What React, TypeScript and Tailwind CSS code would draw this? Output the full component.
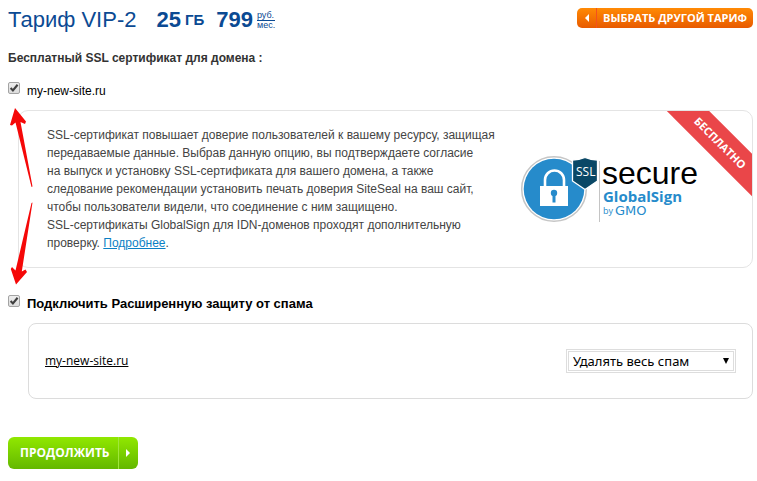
import { useState } from 'react'

const spamModes = ['Удалять весь спам', 'Помечать спам', 'Не фильтровать']

type CheckProps = {
  id: string
  checked: boolean
  onChange: (value: boolean) => void
}

function Check({ id, checked, onChange }: CheckProps) {
  return (
    <span className="relative block w-3 h-3">
      <input
        id={id}
        type="checkbox"
        checked={checked}
        onChange={(e) => onChange(e.target.checked)}
        className="block appearance-none w-3 h-3 rounded-xs border border-[#a3a3a3] bg-linear-to-b from-[#eeeeee] to-[#dcdcdc]"
      />
      {checked && (
        <svg className="absolute inset-0 w-3 h-3 pointer-events-none" viewBox="0 0 12 12" fill="none" stroke="#3f3f3f">
          <path d="M2.6 6.1L4.9 8.4L9.6 2.8" strokeWidth="2.1" />
        </svg>
      )}
    </span>
  )
}

function SecureSeal() {
  return (
    <svg className="w-[180px] h-[68px] shrink-0" viewBox="520 154 180 68" role="img" aria-label="SSL secure GlobalSign by GMO">
      <circle cx="554" cy="188" r="32.300" fill="#fff" stroke="#c6c6c6" strokeWidth="1.500" />
      <circle cx="554" cy="188" r="30.300" fill="#268bcb" />
      <path d="M545 187v-8a9.500 9.500 0 0 1 19 0v8" fill="none" stroke="#fff" strokeWidth="2.600" />
      <rect x="540" y="185" width="28" height="20" fill="#fff" />
      <circle cx="554" cy="192" r="3.200" fill="#268bcb" />
      <path d="M552.500 193h3v8.500h-3z" fill="#268bcb" />
      <path d="M572.500 159Q579 159 585 156.500Q591 159 597.500 159V180L585 188.500L572.500 180Z" fill="#0a4866" stroke="#fff" strokeWidth="1.300" />
      <text x="576" y="175" fontSize="12" fill="#fff" className="font-['Open_Sans',sans-serif]">SSL</text>
      <path d="M599.500 160v61" stroke="#c4c4c4" />
      <text x="602" y="183" fontSize="32" fill="#000" className="font-['Liberation_Sans',sans-serif]">secure</text>
      <text x="603" y="201" fontSize="15" fill="#268bcb" className="font-['Open_Sans',sans-serif] font-bold">GlobalSign</text>
      <text x="603" y="213" fontSize="9" fill="#268bcb" className="font-['Open_Sans',sans-serif]">by</text>
      <text x="615" y="214" fontSize="13" fill="#268bcb" className="font-['DejaVu_Sans',sans-serif]">GMO</text>
    </svg>
  )
}

function Arrows() {
  return (
    <svg className="absolute left-0 -top-1 w-7 h-45 pointer-events-none" viewBox="8 106 28 180" fill="#f50808" aria-hidden="true">
      <path d="M15 108L26 121.500L25 124L20.500 122L32.500 186.500L31.500 187L15.500 122.500L12 125.500L10 125Z" />
      <path d="M32.500 202.500L31.500 203L15.500 270.500L12 267L10.800 269L16 284.500L27 272L25.500 269.500L21.800 271.500Z" />
    </svg>
  )
}

export default function App() {
  const [ssl, setSsl] = useState(true)
  const [spam, setSpam] = useState(true)

  return (
    <main className="bg-white pl-2 pr-1 pt-2 pb-3 font-['Liberation_Sans',Arial,sans-serif] text-xs text-black">
      <header className="flex items-start justify-between">
        <h1 className="flex items-center h-6 text-[#0b4a93] text-[22px]">
          <span>Тариф VIP-2</span>
          <b className="ml-5">25</b>
          <b className="ml-1 text-[15px]">ГБ</b>
          <b className="ml-3">799</b>
          <span className="ml-1 flex flex-col text-[9px] leading-[9px]">
            <span className="border-b border-[#0b4a93]">руб.</span>
            <span>мес.</span>
          </span>
        </h1>
        <button
          type="button"
          className="flex items-center h-5 rounded-[5px] bg-linear-to-b from-[#ff8a05] to-[#e85a00] text-white font-['Open_Sans',sans-serif] font-bold text-[11px]"
        >
          <span className="flex items-center justify-center w-5 h-5 border-r border-[#f4511e]">
            <svg className="w-1 h-2" viewBox="0 0 4 8" fill="#fff">
              <path d="M4 0v8L0 4z" />
            </svg>
          </span>
          <span className="px-1.5">ВЫБРАТЬ ДРУГОЙ ТАРИФ</span>
        </button>
      </header>

      <h2 className="mt-[18px] font-bold text-[#333333]">Бесплатный SSL сертификат для домена :</h2>

      <div className="mt-4 flex items-start gap-[7px]">
        <Check id="ssl" checked={ssl} onChange={setSsl} />
        <label htmlFor="ssl" className="leading-[18px]">my-new-site.ru</label>
      </div>

      <div className="relative mt-2.5">
        <section className="relative ml-2.5 flex items-center overflow-hidden rounded-[10px] border border-[#e4e4e4] py-[15px] pl-7">
          <p className="w-[473px] shrink-0 leading-[18px] text-[#444444]">
            SSL-сертификат повышает доверие пользователей к вашему ресурсу, защищая
            <br />
            передаваемые данные. Выбрав данную опцию, вы подтверждаете согласие
            <br />
            на выпуск и установку SSL-сертификата для вашего домена, а также
            <br />
            следование рекомендации установить печать доверия SiteSeal на ваш сайт,
            <br />
            чтобы пользователи видели, что соединение с ним защищено.
            <br />
            SSL-сертификаты GlobalSign для IDN-доменов проходят дополнительную
            <br />
            проверку. <a href="#ssl-info" className="text-[#0b7fc4] underline">Подробнее</a>.
          </p>
          <SecureSeal />
          <span className="absolute -right-10 top-[17px] w-36 rotate-45 bg-[#ea4649] text-center text-[11px] leading-[30px] font-bold text-white font-['Open_Sans',sans-serif]">
            БЕСПЛАТНО
          </span>
        </section>
        <Arrows />
      </div>

      <div className="mt-[27px] flex items-start gap-[7px]">
        <Check id="spam" checked={spam} onChange={setSpam} />
        <label htmlFor="spam" className="text-[13px] leading-[18px] font-bold">Подключить Расширенную защиту от спама</label>
      </div>

      <section className="mt-2.5 ml-5 flex items-center justify-between rounded-lg border border-[#dcdcdc] py-[25px] px-4">
        <a href="#domain" className="underline font-['Open_Sans',sans-serif]">my-new-site.ru</a>
        <div className="relative">
          <select
            aria-label="Действие со спамом"
            className="block appearance-none w-[170px] h-6 border-3 border-double border-[#dddddd] bg-white pl-1 text-[13px] leading-[18px] font-['Noto_Sans',sans-serif]"
          >
            {spamModes.map((mode) => (
              <option key={mode}>{mode}</option>
            ))}
          </select>
          <svg className="absolute right-[7px] top-[9px] w-1.5 h-1.5 pointer-events-none" viewBox="0 0 6 6">
            <path d="M0 0h6L3 6z" />
          </svg>
        </div>
      </section>

      <button
        type="button"
        className="mt-[38px] flex items-center h-8 rounded-md bg-linear-to-b from-[#91e800] to-[#63b800] text-white font-['Open_Sans',sans-serif] font-bold text-xs"
      >
        <span className="pl-3 pr-2">ПРОДОЛЖИТЬ</span>
        <span className="flex items-center justify-center w-5 h-8 border-l border-[#a0e63c]">
          <svg className="w-1 h-2" viewBox="0 0 4 8" fill="#fff">
            <path d="M0 0v8L4 4z" />
          </svg>
        </span>
      </button>
    </main>
  )
}
